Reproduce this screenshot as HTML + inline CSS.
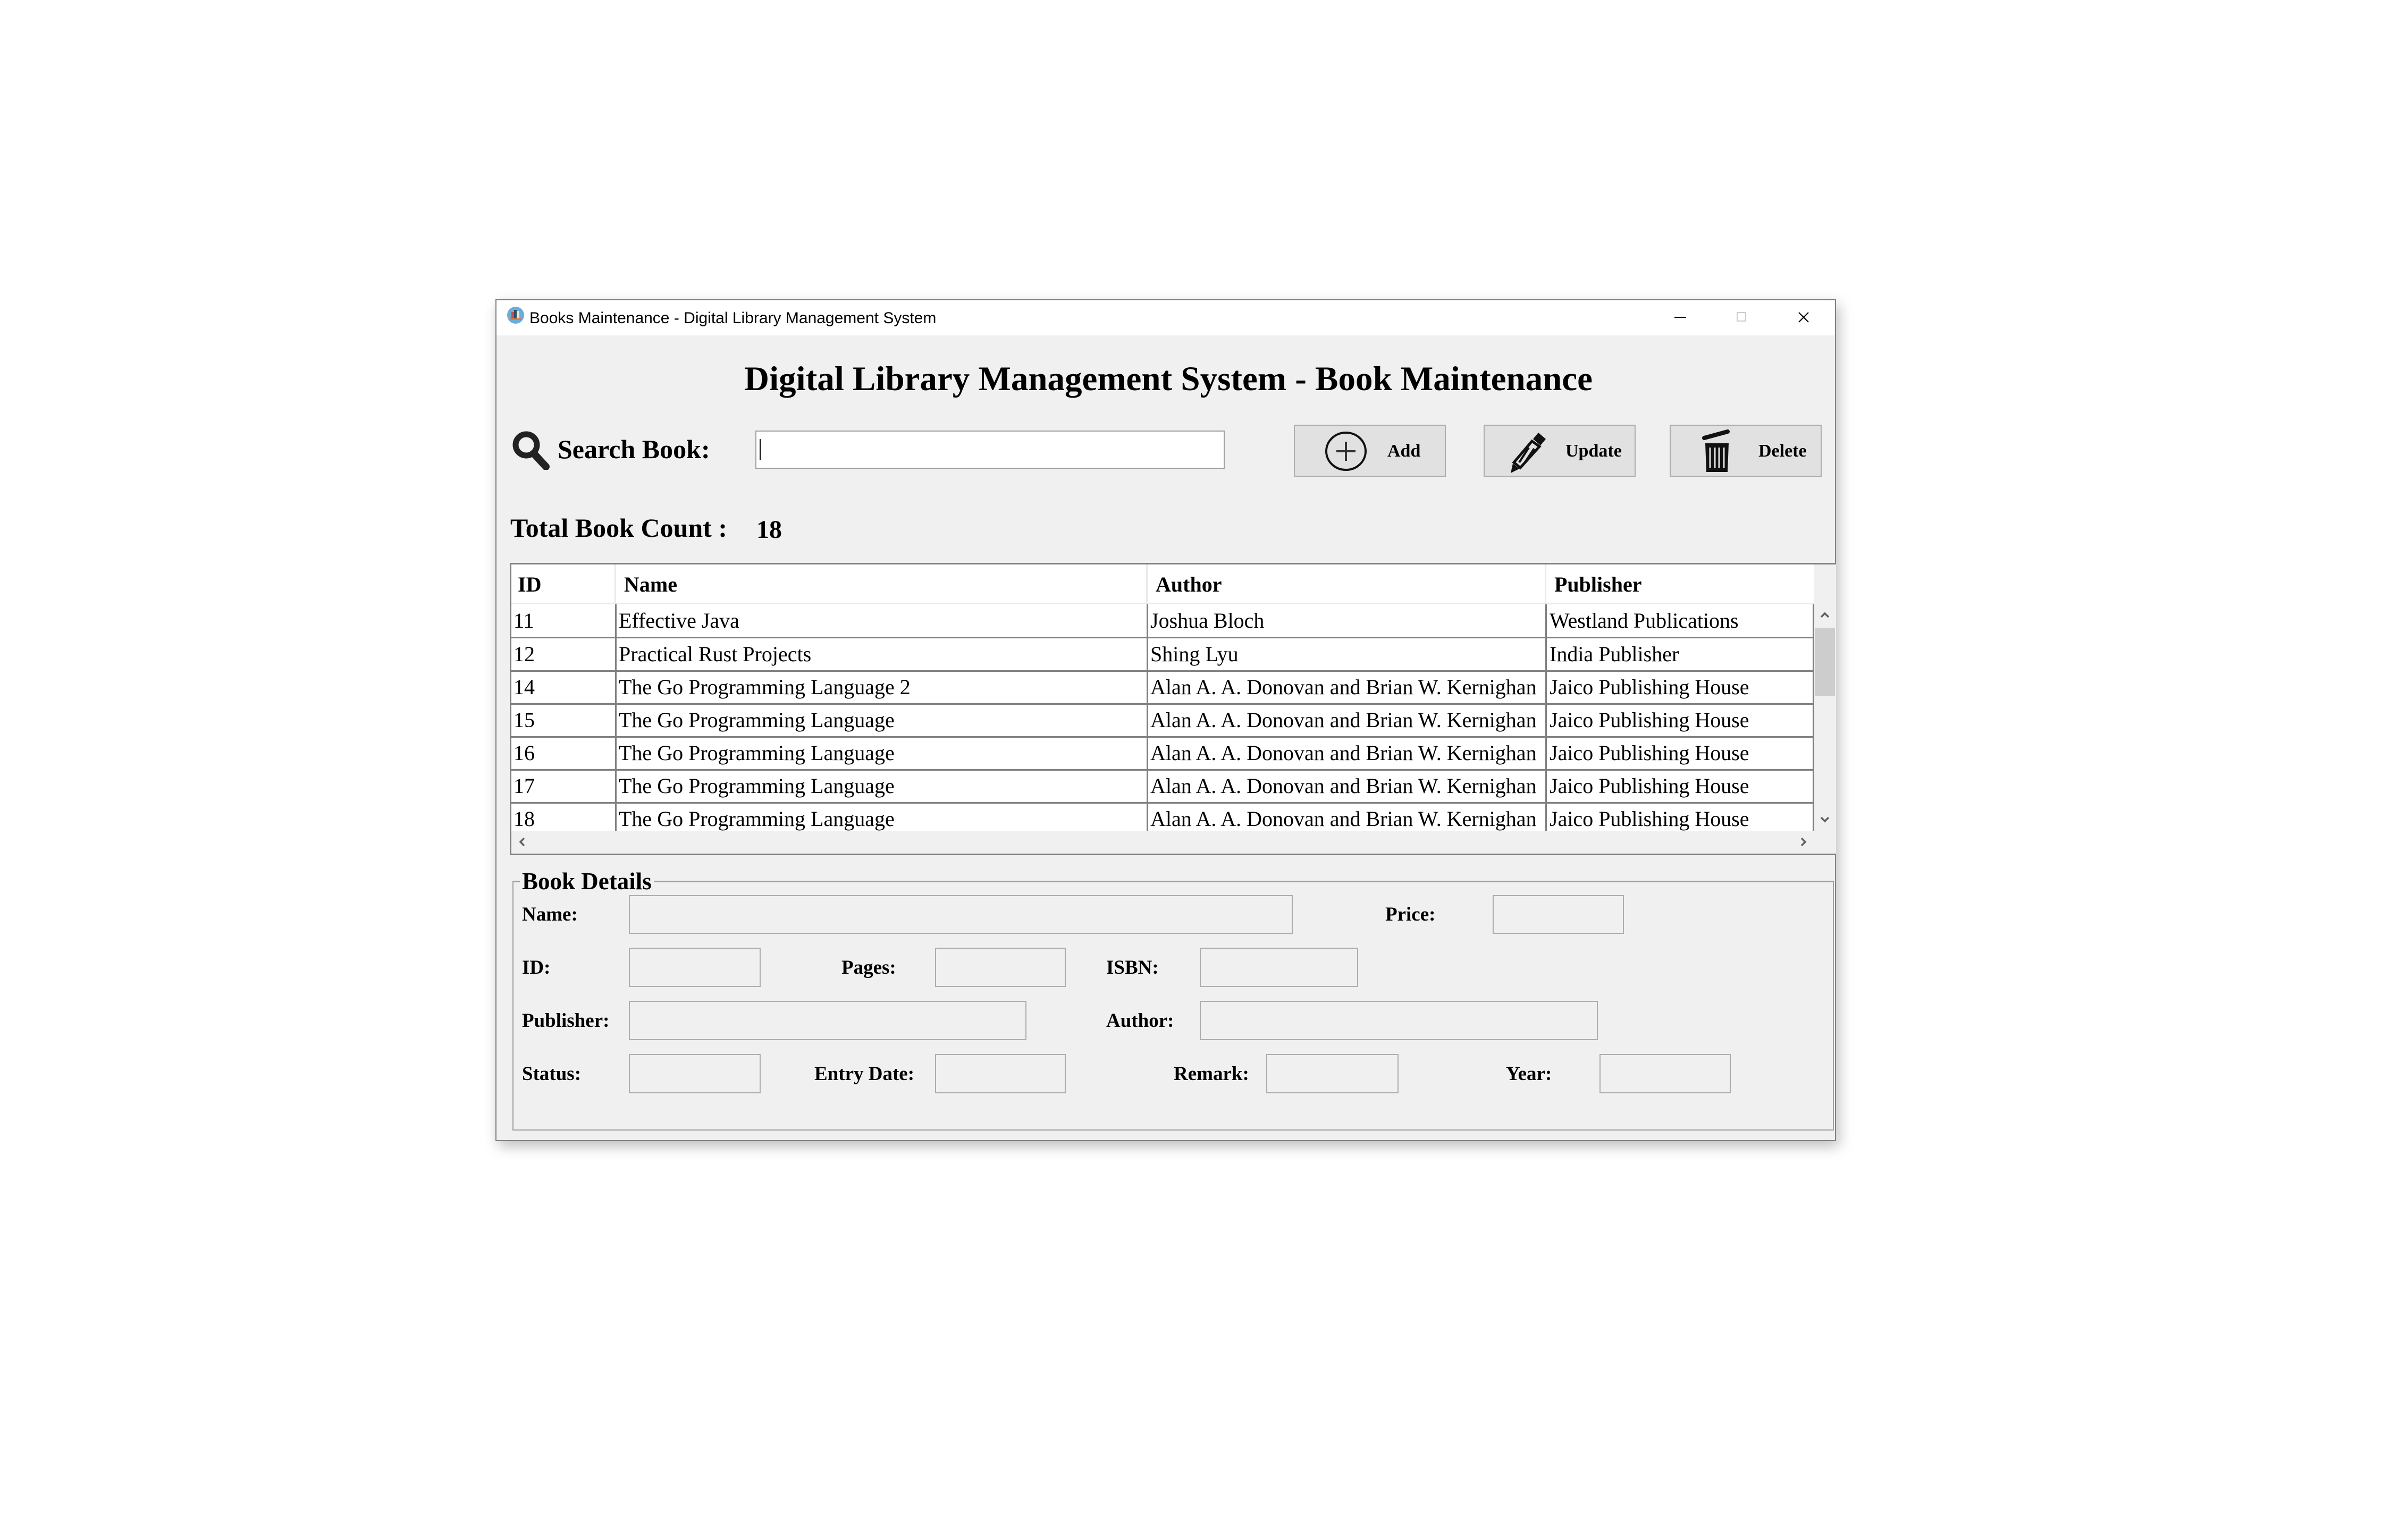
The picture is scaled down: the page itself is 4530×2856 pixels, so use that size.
<!DOCTYPE html>
<html><head><meta charset="utf-8"><style>
*{margin:0;padding:0;box-sizing:border-box}
body{width:4530px;height:2856px;background:#fff;position:relative;overflow:hidden;font-family:"Liberation Serif",serif;color:#000}
.a{position:absolute;white-space:nowrap;line-height:1}
.win{position:absolute;left:932px;top:563px;width:2522px;height:1584px;background:#f0f0f0;border:2px solid #808080;box-shadow:6px 10px 24px rgba(0,0,0,.25)}
.tb{position:absolute;left:934px;top:565px;width:2518px;height:66px;background:#fff}
.sans{font-family:"Liberation Sans",sans-serif}
.b{font-weight:bold}
.btn{position:absolute;top:799px;height:98px;width:286px;background:#e1e1e1;border:2px solid #adadad}
.inp{position:absolute;border:2px solid #adadad;background:#f0f0f0}
.hl{position:absolute;left:961px;width:2451px;height:3px;background:#808080}
.vl{position:absolute;width:3px;background:#808080}
.td{font-size:40px}
.lb{font-size:37px;font-weight:bold}
.bt{font-size:34px;font-weight:bold;top:832px}
</style></head><body>
<div class="win"></div>
<div class="tb"></div>
<svg class="a" style="left:954px;top:577px" width="32" height="32" viewBox="0 0 32 32"><circle cx="16" cy="16" r="16" fill="#6aaed6"/><rect x="8" y="10" width="5" height="12" fill="#c0504d"/><rect x="13" y="6" width="5" height="16" fill="#2f4f5f"/><rect x="18" y="8" width="5" height="14" fill="#e8e8e8"/><rect x="6" y="22" width="20" height="3" fill="#e07a3c"/></svg>
<div class="a sans" style="left:996px;top:584px;font-size:30px">Books Maintenance - Digital Library Management System</div>
<div class="a" style="left:3150px;top:596px;width:22px;height:2px;background:#000"></div>
<div class="a" style="left:3267px;top:587px;width:18px;height:18px;border:2px solid #ccc"></div>
<svg class="a" style="left:3382px;top:586px" width="22" height="22"><path d="M2 2L20 20M20 2L2 20" stroke="#000" stroke-width="2.2"/></svg>

<div class="a b" style="left:934px;width:2518px;text-align:center;top:681px;font-size:65px;padding-left:10px">Digital Library Management System - Book Maintenance</div>

<svg class="a" style="left:963px;top:810px" width="72" height="74" viewBox="0 0 72 74"><circle cx="27" cy="27" r="20" fill="none" stroke="#222" stroke-width="11"/><path d="M41 43L64 68" stroke="#222" stroke-width="14" stroke-linecap="round"/></svg>
<div class="a b" style="left:1049px;top:820px;font-size:50px">Search Book:</div>
<div class="a" style="left:1421px;top:810px;width:883px;height:72px;background:#fff;border:2px solid #a0a0a0"></div>
<div class="a" style="left:1429px;top:826px;width:2px;height:40px;background:#000"></div>

<div class="btn" style="left:2434px"></div>
<svg class="a" style="left:2492px;top:811px" width="80" height="76"><ellipse cx="40" cy="38" rx="37" ry="35" fill="none" stroke="#111" stroke-width="4"/><path d="M40 20V56M22 38H58" stroke="#333" stroke-width="4"/></svg>
<div class="a bt" style="left:2610px">Add</div>
<div class="btn" style="left:2791px"></div>
<svg class="a" style="left:2840px;top:808px" width="72" height="84" viewBox="0 0 72 84"><path d="M54 6L68 18L58 30L44 18Z" fill="#111"/><path d="M42 22L56 32L20 72L8 62Z" fill="none" stroke="#111" stroke-width="5"/><path d="M36 34L18 62M46 36L26 66" stroke="#111" stroke-width="4"/><path d="M6 64L18 74L2 82Z" fill="#111"/></svg>
<div class="a bt" style="left:2945px">Update</div>
<div class="btn" style="left:3141px"></div>
<svg class="a" style="left:3200px;top:808px" width="60" height="84" viewBox="0 0 60 84"><path d="M6 16L50 4" stroke="#111" stroke-width="8" stroke-linecap="round"/><path d="M8 26H52L50 80H10Z" fill="#111"/><path d="M17 34V72M26 34V72M34 34V72M43 34V72" stroke="#e1e1e1" stroke-width="3"/></svg>
<div class="a bt" style="left:3308px">Delete</div>

<div class="a b" style="left:960px;top:968px;font-size:50px">Total Book Count :</div>
<div class="a b" style="left:1423px;top:973px;font-size:48px">18</div>

<!-- table -->
<div class="a" style="left:959px;top:1059px;width:2495px;height:550px;border:3px solid #808080;border-right:none;background:#f0f0f0"></div>
<div class="a" style="left:962px;top:1062px;width:2450px;height:501px;background:#fff"></div>
<div class="a" style="left:962px;top:1134px;width:2450px;height:3px;background:#eaeaea"></div>
<div class="a" style="left:1156px;top:1062px;width:3px;height:72px;background:#eaeaea"></div>
<div class="a" style="left:2156px;top:1062px;width:3px;height:72px;background:#eaeaea"></div>
<div class="a" style="left:2906px;top:1062px;width:3px;height:72px;background:#eaeaea"></div>
<div class="vl" style="left:1157px;top:1137px;height:426px"></div>
<div class="vl" style="left:2157px;top:1137px;height:426px"></div>
<div class="vl" style="left:2907px;top:1137px;height:426px"></div>
<div class="vl" style="left:3410px;top:1137px;height:426px"></div>
<div class="hl" style="top:1198px"></div>
<div class="hl" style="top:1261px"></div>
<div class="hl" style="top:1323px"></div>
<div class="hl" style="top:1385px"></div>
<div class="hl" style="top:1447px"></div>
<div class="hl" style="top:1509px"></div>
<div class="a" style="left:3414px;top:1137px;width:38px;height:426px;background:#f0f0f0"></div>
<div class="a" style="left:3414px;top:1181px;width:38px;height:128px;background:#cdcdcd"></div>
<svg class="a" style="left:3423px;top:1150px" width="20" height="14"><path d="M3 11L10 4L17 11" fill="none" stroke="#606060" stroke-width="3.5"/></svg>
<svg class="a" style="left:3423px;top:1535px" width="20" height="14"><path d="M3 3L10 10L17 3" fill="none" stroke="#606060" stroke-width="3.5"/></svg>
<svg class="a" style="left:975px;top:1574px" width="14" height="20"><path d="M11 3L4 10L11 17" fill="none" stroke="#606060" stroke-width="3.5"/></svg>
<svg class="a" style="left:3386px;top:1574px" width="14" height="20"><path d="M3 3L10 10L3 17" fill="none" stroke="#606060" stroke-width="3.5"/></svg>

<div class="a b" style="left:974px;top:1080px;font-size:40px">ID</div>
<div class="a b" style="left:1174px;top:1080px;font-size:40px">Name</div>
<div class="a b" style="left:2174px;top:1080px;font-size:40px">Author</div>
<div class="a b" style="left:2924px;top:1080px;font-size:40px">Publisher</div>

<div class="a td" style="left:966px;top:1148px">11</div><div class="a td" style="left:1164px;top:1148px">Effective Java</div><div class="a td" style="left:2164px;top:1148px">Joshua Bloch</div><div class="a td" style="left:2915px;top:1148px">Westland Publications</div>
<div class="a td" style="left:966px;top:1211px">12</div><div class="a td" style="left:1164px;top:1211px">Practical Rust Projects</div><div class="a td" style="left:2164px;top:1211px">Shing Lyu</div><div class="a td" style="left:2915px;top:1211px">India Publisher</div>
<div class="a td" style="left:966px;top:1273px">14</div><div class="a td" style="left:1164px;top:1273px">The Go Programming Language 2</div><div class="a td" style="left:2164px;top:1273px">Alan A. A. Donovan and Brian W. Kernighan</div><div class="a td" style="left:2915px;top:1273px">Jaico Publishing House</div>
<div class="a td" style="left:966px;top:1335px">15</div><div class="a td" style="left:1164px;top:1335px">The Go Programming Language</div><div class="a td" style="left:2164px;top:1335px">Alan A. A. Donovan and Brian W. Kernighan</div><div class="a td" style="left:2915px;top:1335px">Jaico Publishing House</div>
<div class="a td" style="left:966px;top:1397px">16</div><div class="a td" style="left:1164px;top:1397px">The Go Programming Language</div><div class="a td" style="left:2164px;top:1397px">Alan A. A. Donovan and Brian W. Kernighan</div><div class="a td" style="left:2915px;top:1397px">Jaico Publishing House</div>
<div class="a td" style="left:966px;top:1459px">17</div><div class="a td" style="left:1164px;top:1459px">The Go Programming Language</div><div class="a td" style="left:2164px;top:1459px">Alan A. A. Donovan and Brian W. Kernighan</div><div class="a td" style="left:2915px;top:1459px">Jaico Publishing House</div>
<div style="position:absolute;left:962px;top:1512px;width:2450px;height:51px;overflow:hidden">
<div class="a td" style="left:4px;top:9px">18</div><div class="a td" style="left:202px;top:9px">The Go Programming Language</div><div class="a td" style="left:1202px;top:9px">Alan A. A. Donovan and Brian W. Kernighan</div><div class="a td" style="left:1953px;top:9px">Jaico Publishing House</div>
</div>

<!-- details -->
<div class="a" style="left:964px;top:1657px;width:2486px;height:470px;border:2px solid #a0a0a0;border-top:3px solid #a0a0a0"></div>
<div class="a b" style="left:978px;top:1636px;font-size:45px;background:#f0f0f0;padding:0 4px">Book Details</div>

<div class="a lb" style="left:982px;top:1702px">Name:</div>
<div class="inp" style="left:1183px;top:1684px;width:1249px;height:73px"></div>
<div class="a lb" style="left:2606px;top:1702px">Price:</div>
<div class="inp" style="left:2808px;top:1684px;width:247px;height:73px"></div>

<div class="a lb" style="left:982px;top:1802px">ID:</div>
<div class="inp" style="left:1183px;top:1783px;width:248px;height:74px"></div>
<div class="a lb" style="left:1583px;top:1802px">Pages:</div>
<div class="inp" style="left:1759px;top:1783px;width:246px;height:74px"></div>
<div class="a lb" style="left:2081px;top:1802px">ISBN:</div>
<div class="inp" style="left:2257px;top:1783px;width:298px;height:74px"></div>

<div class="a lb" style="left:982px;top:1902px">Publisher:</div>
<div class="inp" style="left:1183px;top:1883px;width:748px;height:74px"></div>
<div class="a lb" style="left:2081px;top:1902px">Author:</div>
<div class="inp" style="left:2257px;top:1883px;width:749px;height:74px"></div>

<div class="a lb" style="left:982px;top:2002px">Status:</div>
<div class="inp" style="left:1183px;top:1983px;width:248px;height:74px"></div>
<div class="a lb" style="left:1532px;top:2002px">Entry Date:</div>
<div class="inp" style="left:1759px;top:1983px;width:246px;height:74px"></div>
<div class="a lb" style="left:2208px;top:2002px">Remark:</div>
<div class="inp" style="left:2382px;top:1983px;width:249px;height:74px"></div>
<div class="a lb" style="left:2833px;top:2002px">Year:</div>
<div class="inp" style="left:3009px;top:1983px;width:247px;height:74px"></div>
</body></html>
